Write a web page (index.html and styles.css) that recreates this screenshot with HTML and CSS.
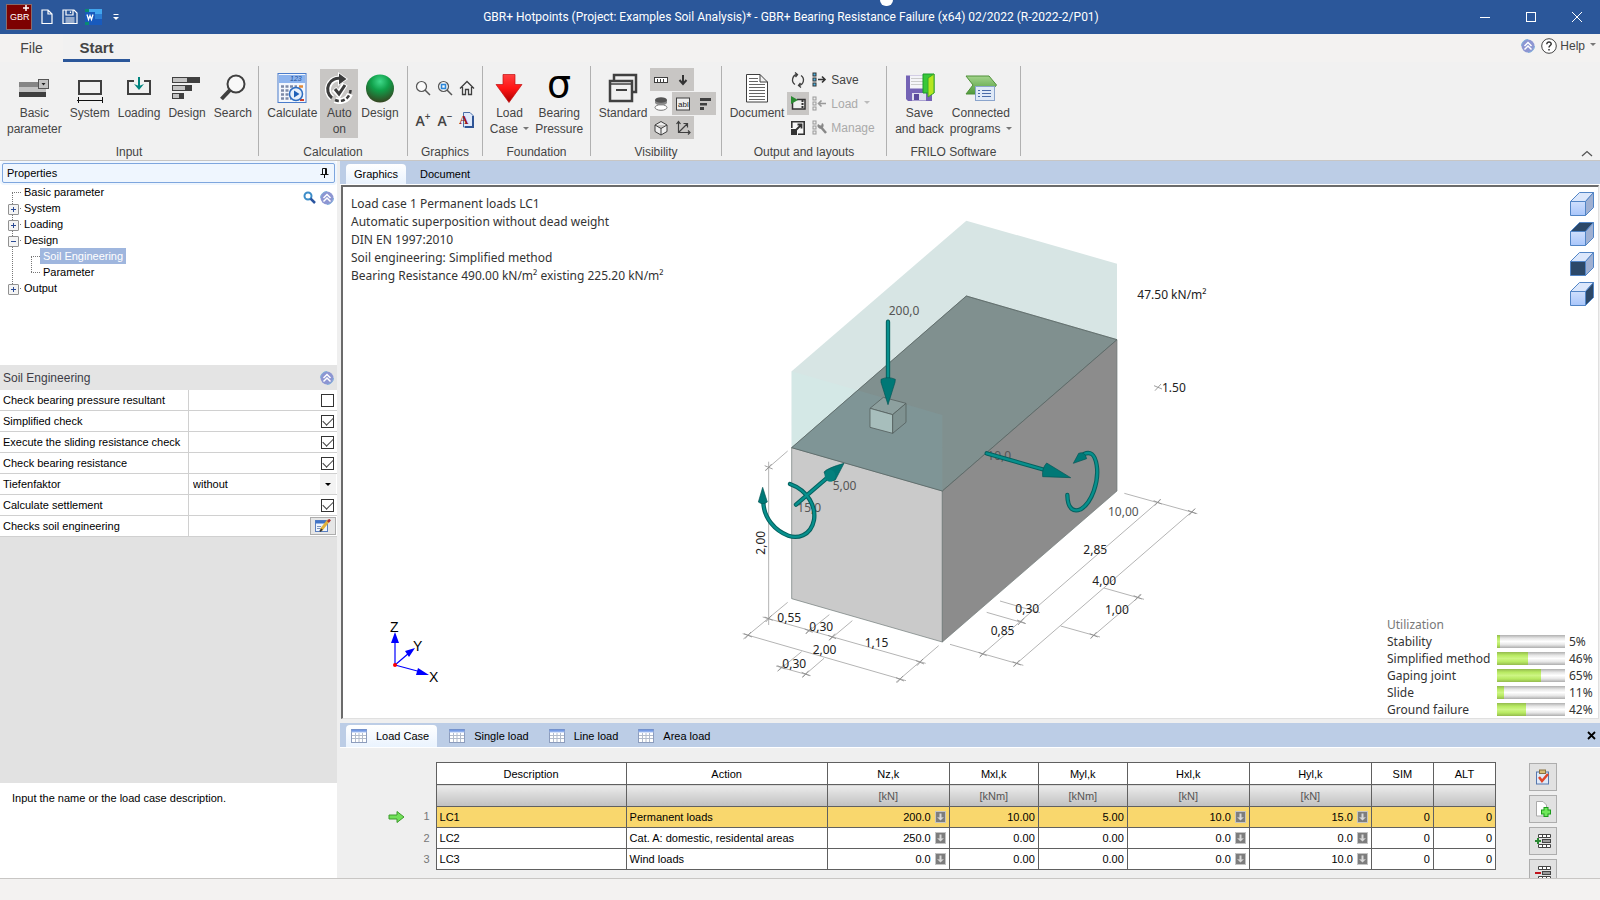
FILE: index.html
```html
<!DOCTYPE html>
<html lang="en">
<head>
    <meta charset="UTF-8">
    <meta name="viewport" content="width=device-width, initial-scale=1.0">
    <title>GBR+ Bearing Resistance Failure</title>
    <link rel="stylesheet" href="styles.css">
</head>
<body>
    <!-- shared icons -->
    <svg class="defs" width="0" height="0" aria-hidden="true">
        <defs>
            <linearGradient id="gBlue" x1="0" y1="0" x2="0" y2="1">
                <stop offset="0" stop-color="#cfdffc"/><stop offset="1" stop-color="#a9c6fb"/>
            </linearGradient>
            <linearGradient id="gRed" x1="0" y1="0" x2="0" y2="1">
                <stop offset="0" stop-color="#ff4040"/><stop offset="0.5" stop-color="#ff1414"/><stop offset="1" stop-color="#a80000"/>
            </linearGradient>
            <radialGradient id="gBall" cx="0.5" cy="0.25" r="0.8">
                <stop offset="0" stop-color="#3fd98a"/><stop offset="0.4" stop-color="#10a04a"/><stop offset="1" stop-color="#3a3a1c"/>
            </radialGradient>
            <linearGradient id="gTab" x1="0" y1="0" x2="0" y2="1">
                <stop offset="0" stop-color="#5a86dc"/><stop offset="1" stop-color="#a9c2f2"/>
            </linearGradient>
            <linearGradient id="gChev" x1="0" y1="0" x2="0" y2="1">
                <stop offset="0" stop-color="#a3d48c"/><stop offset="1" stop-color="#4f9a3a"/>
            </linearGradient>
            <symbol id="iUp" viewBox="0 0 14 14">
                <circle cx="7" cy="7" r="6.5" fill="#8d96d2"/>
                <circle cx="7" cy="7" r="6.5" fill="none" stroke="#7fb0dc" stroke-width="1" stroke-dasharray="10 10"/>
                <path d="M3.500 7 L7 3.500 L10.500 7 M3.500 10.500 L7 7 L10.500 10.500" fill="none" stroke="#fff" stroke-width="1.500"/>
            </symbol>
            <symbol id="iGrid" viewBox="0 0 16 14">
                <rect x="0.5" y="0.5" width="15" height="13" fill="#fff" stroke="#8d9dbd"/>
                <rect x="0.5" y="0.5" width="15" height="3" fill="url(#gTab)"/>
                <path d="M1 6.500 H15 M1 9.500 H15 M4.500 4 V13 M8 4 V13 M11.500 4 V13" stroke="#b3bccb"/>
            </symbol>
            <symbol id="iList" viewBox="0 0 15 15">
                <rect x="1" y="1" width="3" height="3"/><rect x="1" y="6" width="3" height="3"/><rect x="1" y="11" width="3" height="3"/>
            </symbol>
            <symbol id="iDown" viewBox="0 0 11 12">
                <rect x="0.5" y="0.5" width="10" height="11" fill="#7d7d7d" stroke="#c4c4c4"/>
                <path d="M5.500 2.500 V7" stroke="#dadada" stroke-width="2"/>
                <path d="M2 6 L5.500 9.500 L9 6 L7 6.500 H4 Z" fill="#dadada"/>
            </symbol>
            <symbol id="iRows" viewBox="0 0 18 16">
                <path d="M4.500 1.500 H16.500 V4.500 H4.500 Z M8.500 1.500 V4.500 M12.500 1.500 V4.500 M4.500 11.500 H16.500 V14.500 H4.500 Z M8.500 11.500 V14.500 M12.500 11.500 V14.500" fill="#fff" stroke="#444"/>
                <rect x="8.5" y="6.500" width="8" height="3" fill="#9a9a9a" stroke="#444"/>
            </symbol>
            <symbol id="iTick" viewBox="-18 -18 36 36">
                <path d="M-9 10 L9 -10 M-12 -5 L12 5" stroke="#8c8c8c" stroke-width="2.500"/>
            </symbol>
        </defs>
    </svg>

    <header class="titlebar">
        <div class="quick">
            <svg width="26" height="26" viewBox="0 0 26 26">
                <rect x="0.5" y="0.5" width="25" height="25" fill="#7d0202" stroke="#8a6a6a"/>
                <text x="4" y="16" class="logo-text">GBR</text>
                <path d="M17 4 H23 M20 1 V7" stroke="#fff" stroke-width="1.500"/>
            </svg>
            <button aria-label="New">
                <svg width="12" height="16" viewBox="0 0 12 16"><path d="M1 1 H7 L11 5 V14.500 H1 Z M7 1 V5 H11" fill="none" stroke="#fff" stroke-width="1.200"/></svg>
            </button>
            <button aria-label="Save">
                <svg width="16" height="16" viewBox="0 0 16 16"><path d="M1 1 H12 L15 4 V14.500 H1 Z M4 1 V6 H11 V1 M8.500 2.500 V4 M3.500 9 H12.500 M3.500 11 H12.500 M3.500 13 H12.500" fill="none" stroke="#fff" stroke-width="1.200"/></svg>
            </button>
            <button aria-label="Word">
                <svg width="17" height="16" viewBox="0 0 17 16">
                    <rect x="4" y="0" width="13" height="5" fill="#41a5ee"/><rect x="4" y="5" width="13" height="5" fill="#2b7cd3"/><rect x="4" y="10" width="13" height="6" fill="#185abd"/>
                    <rect x="0" y="3" width="10" height="10" fill="#185abd"/><path d="M0 0 h4 v3 h-4 z M0 13 h4 v3 h-4 z" fill="#0a8a72"/>
                    <path d="M2 5.500 L3.500 10.500 L5 6.500 L6.500 10.500 L8 5.500" fill="none" stroke="#fff" stroke-width="1.300"/>
                </svg>
            </button>
            <button aria-label="Customize">
                <svg width="6" height="8" viewBox="0 0 6 8"><path d="M0.500 1.500 H5.500" stroke="#fff"/><path d="M0 4 H6 L3 7 Z" fill="#fff"/></svg>
            </button>
        </div>
        <h1>GBR+ Hotpoints (Project: Examples Soil Analysis)* - GBR+ Bearing Resistance Failure (x64) 02/2022 (R-2022-2/P01)</h1>
        <div class="winctl">
            <button aria-label="Minimize"><svg width="12" height="12" viewBox="0 0 12 12"><path d="M1 6.500 H11" stroke="#fff"/></svg></button>
            <button aria-label="Maximize"><svg width="12" height="12" viewBox="0 0 12 12"><rect x="1.500" y="1.500" width="9" height="9" fill="none" stroke="#fff"/></svg></button>
            <button aria-label="Close"><svg width="12" height="12" viewBox="0 0 12 12"><path d="M1 1 L11 11 M11 1 L1 11" stroke="#fff"/></svg></button>
        </div>
        <span class="pointer"></span>
    </header>

    <nav class="tabs">
        <a href="#file">File</a>
        <a href="#start" class="active">Start</a>
        <div class="help">
            <svg width="14" height="14"><use href="#iUp"/></svg>
            <button>
                <svg width="16" height="16" viewBox="0 0 16 16"><circle cx="8" cy="8" r="7.300" fill="#fff" stroke="#444"/><path d="M5.800 6.200 C5.800 3 10.300 3.300 10.200 6 C10.200 7.500 8 7.500 8 9.500 M8 11 V12.500" fill="none" stroke="#333" stroke-width="1.500"/></svg>
                Help <i class="caret"></i>
            </button>
        </div>
    </nav>

    <section class="ribbon">
        <div class="group g-input">
            <div class="tools">
                <button class="big">
                    <svg width="32" height="32" viewBox="0 0 32 32"><rect x="1" y="10" width="20" height="5" fill="#858585"/><rect x="1" y="15" width="27" height="5" fill="#c3c3c3"/><rect x="1" y="20" width="27" height="5" fill="#3f3f3f"/><rect x="20.500" y="7.500" width="10" height="9" fill="#c3c3c3" stroke="#555"/><path d="M23.500 11 H27.500 L25.500 13.500 Z" fill="#222"/></svg>
                    <span>Basic<br>parameter</span>
                </button>
                <button class="big">
                    <svg width="32" height="32" viewBox="0 0 32 32"><rect x="5" y="9" width="22" height="13" fill="none" stroke="#404040" stroke-width="2"/><path d="M3 28.500 H29 M4.500 25 V31 M28.500 25 V31" stroke="#111"/></svg>
                    <span>System</span>
                </button>
                <button class="big">
                    <svg width="32" height="32" viewBox="0 0 32 32"><rect x="5" y="9" width="22" height="13" fill="none" stroke="#404040" stroke-width="2"/><path d="M11 8 H21 V11 H11 Z" fill="#f1f1f1"/><path d="M16 5 V14" stroke="#00857f" stroke-width="2"/><path d="M11 12 L16 18 L21 12 L16 14 Z" fill="#00857f"/></svg>
                    <span>Loading</span>
                </button>
                <button class="big">
                    <svg width="32" height="32" viewBox="0 0 32 32"><path d="M1 5 H29 V11 H1 Z M1 13 H21 V19 H1 Z M1 21 H13 V27 H1 Z" fill="#404040"/><path d="M2 6 H16 V10 H2 Z M2 14 H14 V18 H2 Z M2 22 H8 V26 H2 Z" fill="#c3c3c3"/></svg>
                    <span>Design</span>
                </button>
                <button class="big">
                    <svg width="32" height="32" viewBox="0 0 32 32"><circle cx="19" cy="12" r="8.500" fill="#f8f8f8" stroke="#404040" stroke-width="2"/><path d="M13 18 L4.500 27" stroke="#404040" stroke-width="4"/></svg>
                    <span>Search</span>
                </button>
            </div>
            <h2>Input</h2>
        </div>

        <div class="group g-calc">
            <div class="tools">
                <button class="big">
                    <svg width="32" height="32" viewBox="0 0 32 32">
                        <rect x="2" y="1.500" width="28" height="29" fill="#f3f7fd" stroke="#4a7ccb"/><rect x="3" y="3" width="26" height="8" fill="#8db4ee"/>
                        <text x="14" y="9" class="tiny">123</text>
                        <path d="M5 14.500 H21 M5 18.500 H15 M5 22.500 H15 M5 26.500 H15" stroke="#7d8ba8" stroke-width="2.500" stroke-dasharray="3 1.500"/><path d="M23 14.500 H27" stroke="#e08a3a" stroke-width="2.500"/><path d="M24 28 H28" stroke="#d0402a" stroke-width="2"/>
                        <circle cx="20" cy="22" r="6.500" fill="#e4eefb" stroke="#2d6cc0" stroke-width="1.500"/><path d="M18 18.500 L23.500 22 L18 25.500 Z" fill="#1d5fb8"/>
                    </svg>
                    <span>Calculate</span>
                </button>
                <button class="big on">
                    <svg width="32" height="32" viewBox="0 0 32 32">
                        <g fill="none" stroke="#fff" stroke-width="6"><path d="M9 26 A11 11 0 0 1 16 6.500 M12 28 A11 11 0 0 0 27 22 M11 17 L16 22 L22 12"/></g>
                        <path d="M15 0 L25 7 L15 14 Z" fill="#fff"/>
                        <path d="M9 26 A11 11 0 0 1 18 6.500" fill="none" stroke="#3c3c3c" stroke-width="3"/><path d="M16 1.500 L23.500 7 L16 12.500 Z" fill="#3c3c3c"/>
                        <path d="M12 28 A11 11 0 0 0 27.500 18" fill="none" stroke="#3c3c3c" stroke-width="2.500" stroke-dasharray="4 2"/>
                        <path d="M12 17 L16 22 L22 13" fill="none" stroke="#3c3c3c" stroke-width="3"/>
                    </svg>
                    <span>Auto<br>on</span>
                </button>
                <button class="big">
                    <svg width="32" height="32" viewBox="0 0 32 32"><circle cx="16" cy="16.500" r="14" fill="url(#gBall)"/></svg>
                    <span>Design</span>
                </button>
            </div>
            <h2>Calculation</h2>
        </div>

        <div class="group g-graphics">
            <div class="minis">
                <button aria-label="Zoom"><svg width="16" height="16" viewBox="0 0 16 16"><circle cx="6.500" cy="6.500" r="5" fill="#fafafa" stroke="#555" stroke-width="1.200"/><path d="M10 10 L15 15" stroke="#555" stroke-width="1.500"/></svg></button>
                <button aria-label="Zoom window"><svg width="16" height="16" viewBox="0 0 16 16"><circle cx="6.500" cy="6.500" r="5" fill="#fafafa" stroke="#555" stroke-width="1.200"/><path d="M10 10 L15 15" stroke="#555" stroke-width="1.500"/><rect x="4.500" y="4.500" width="4" height="4" fill="none" stroke="#2b86d8" stroke-width="1.600"/></svg></button>
                <button aria-label="Home"><svg width="16" height="16" viewBox="0 0 16 16"><path d="M1 8.500 L8 1.500 L15 8.500 M3.500 7 V14.500 H6.500 V9.500 H9.500 V14.500 H12.500 V7" fill="none" stroke="#3f3f3f" stroke-width="1.300"/></svg></button>
                <button class="letter">A<sup>+</sup></button>
                <button class="letter">A<sup>−</sup></button>
                <button aria-label="Font"><svg width="16" height="16" viewBox="0 0 16 16"><path d="M4.500 0.500 H11 L14.500 4 V15 H4.500 Z" fill="#dfe9fa" stroke="#4a6ea8"/><path d="M14 4 V15 H6" fill="none" stroke="#2f5596" stroke-width="2"/><text x="0" y="12" class="red-a">A</text></svg></button>
            </div>
            <h2>Graphics</h2>
        </div>

        <div class="group g-found">
            <div class="tools">
                <button class="big">
                    <svg width="32" height="32" viewBox="0 0 32 32"><path d="M10 2.500 H22 V12.500 H29 L16 30.500 L3 12.500 H10 Z" fill="url(#gRed)" stroke="#c21010" stroke-width="0.700"/></svg>
                    <span>Load<br>Case <i class="caret"></i></span>
                </button>
                <button class="big">
                    <svg width="32" height="32" viewBox="0 0 32 32"><text x="16" y="25" text-anchor="middle" class="sigma">σ</text></svg>
                    <span>Bearing<br>Pressure</span>
                </button>
            </div>
            <h2>Foundation</h2>
        </div>

        <div class="group g-vis">
            <div class="tools">
                <button class="big">
                    <svg width="32" height="32" viewBox="0 0 32 32"><path d="M7 8 V3 H29 V20 H25" fill="none" stroke="#404040" stroke-width="2.500"/><rect x="3" y="9" width="22" height="20" fill="#f1f1f1" stroke="#404040" stroke-width="2.500"/><path d="M4 12 H24" stroke="#404040" stroke-width="1.500"/><path d="M9 18 H20" stroke="#404040" stroke-width="2"/></svg>
                    <span>Standard</span>
                </button>
                <div class="toggles">
                    <button class="on" aria-label="Dimensions"><svg width="16" height="16" viewBox="0 0 16 16"><rect x="1.500" y="5.500" width="13" height="5" fill="#fff" stroke="#3f3f3f"/><path d="M4.500 7 V10 M7.500 7 V10 M10.500 7 V10" stroke="#3f3f3f"/></svg></button>
                    <button class="on" aria-label="Loads"><svg width="16" height="16" viewBox="0 0 16 16"><path d="M8 3 V11 M4.500 8 L8 12 L11.500 8" fill="none" stroke="#333" stroke-width="2"/></svg></button>
                    <i></i>
                    <button aria-label="Layers"><svg width="16" height="16" viewBox="0 0 16 16"><ellipse cx="8" cy="11.500" rx="6" ry="2.800" fill="#fff" stroke="#777"/><path d="M2 4 V7 C4 10 12 10 14 7 V4 Z" fill="#8a8a8a"/><ellipse cx="8" cy="4" rx="6" ry="2.800" fill="#555"/></svg></button>
                    <button class="on" aria-label="Texts"><svg width="16" height="16" viewBox="0 0 16 16"><rect x="1.500" y="2" width="13" height="12" fill="#eee" stroke="#3f3f3f"/><text x="3" y="11" class="abl">abl</text></svg></button>
                    <button class="on" aria-label="Bars"><svg width="16" height="16" viewBox="0 0 16 16"><path d="M3 2 H14 V5 H3 Z M3 7 H10 V9.500 H3 Z M3 11 H7 V14 H3 Z" fill="#3f3f3f"/></svg></button>
                    <button class="on" aria-label="Solid"><svg width="16" height="16" viewBox="0 0 16 16"><path d="M8 1.500 L14 5 V11.500 L8 15 L2 11.500 V5 Z M2 5 L8 8.500 L14 5 M8 8.500 V15" fill="#eee" stroke="#3f3f3f"/></svg></button>
                    <button class="on" aria-label="Axes"><svg width="16" height="16" viewBox="0 0 16 16"><path d="M3.500 2 V12.500 H15 M1.500 4 L3.500 1.500 L5.500 4 M13 10.500 L15 12.500 L13 14.500 M3.500 12.500 L12 4 M8.500 3.500 H12.500 V7.500" fill="none" stroke="#3f3f3f" stroke-width="1.200"/></svg></button>
                    <i></i>
                </div>
            </div>
            <h2>Visibility</h2>
        </div>

        <div class="group g-out">
            <div class="tools">
                <button class="big">
                    <svg width="32" height="32" viewBox="0 0 32 32"><path d="M5.500 2.500 H19 L26.500 10 V30 H5.500 Z M19 2.500 V10 H26.500" fill="#fff" stroke="#3f3f3f"/><path d="M8 6.500 H17 M8 9.500 H17 M8 12.500 H24 M8 15.500 H24 M8 18.500 H24 M8 21.500 H24 M8 24.500 H24 M8 27.500 H24" stroke="#666"/></svg>
                    <span>Document</span>
                </button>
                <div class="stack">
                    <button aria-label="Refresh"><svg width="16" height="16" viewBox="0 0 16 16"><path d="M7 2.500 A5.500 5.500 0 0 0 5 12.500 M9 13.500 A5.500 5.500 0 0 0 11 3.500" fill="none" stroke="#3f3f3f" stroke-width="1.300"/><path d="M5 0.500 L7.500 2.500 L5.500 5 M11 15.500 L8.500 13.500 L10.500 11" fill="none" stroke="#3f3f3f" stroke-width="1.300"/></svg></button>
                    <button class="on" aria-label="Preview"><svg width="16" height="16" viewBox="0 0 16 16"><path d="M2.500 5 V13 H15 V3.500 H7" fill="#eee" stroke="#333" stroke-width="1.500"/><path d="M12.500 4 V13" stroke="#333" stroke-width="2" stroke-dasharray="2 1"/><path d="M1 0 L8 4 L1 8 Z" fill="#2a8a32"/></svg></button>
                    <button aria-label="Enlarge"><svg width="16" height="16" viewBox="0 0 16 16"><path d="M1.800 8 V1.800 H14.200 V14.200 H8" fill="#f7f7f7" stroke="#333" stroke-width="1.600"/><path d="M1 9 H7 V15 H1 Z" fill="#333"/><path d="M6 10 L11.500 4.500 M7.500 4.500 H11.500 V8.500" stroke="#333" fill="none" stroke-width="1.800"/></svg></button>
                </div>
                <div class="stack labels">
                    <button><svg width="15" height="15" viewBox="0 0 15 15"><use href="#iList" fill="#4ab4e6" stroke="#333" width="15" height="15"/><path d="M6 7.500 H13 M10 4.500 L13 7.500 L10 10.500" fill="none" stroke="#333" stroke-width="1.600"/></svg>Save</button>
                    <button disabled><svg width="15" height="15" viewBox="0 0 15 15"><use href="#iList" fill="#eee" stroke="#999" width="15" height="15"/><path d="M6.500 7.500 H14 M9.500 4.500 L6.500 7.500 L9.500 10.500" fill="none" stroke="#999" stroke-width="1.600"/></svg>Load <i class="caret"></i></button>
                    <button disabled><svg width="15" height="15" viewBox="0 0 15 15"><use href="#iList" fill="#eee" stroke="#999" width="15" height="15"/><path d="M8 6 L14 13" stroke="#888" stroke-width="2.500"/><path d="M6 4 A3 3 0 1 0 10 3 L9 6 Z" fill="#888"/></svg>Manage</button>
                </div>
            </div>
            <h2>Output and layouts</h2>
        </div>

        <div class="group g-frilo">
            <div class="tools">
                <button class="big">
                    <svg width="32" height="32" viewBox="0 0 32 32"><path d="M3 3.500 H29 V29 H5 L3 27 Z" fill="#7463b5"/><rect x="7" y="3.500" width="14" height="13" fill="#f4f4f8"/><path d="M8 6.500 H20 M8 9.500 H20 M8 12.500 H20" stroke="#ccc"/><rect x="9" y="21" width="14" height="7.500" fill="#dde"/><rect x="11" y="22" width="5" height="6" fill="#5a4a9c"/><path d="M20 2 H31 V21 H20 Z" fill="#38c838" stroke="#1a9a2a"/><path d="M31 2 V21 L25 25 V6 Z" fill="#b6e620" stroke="#3aa82a"/></svg>
                    <span>Save<br>and back</span>
                </button>
                <button class="big">
                    <svg width="32" height="32" viewBox="0 0 32 32"><path d="M1 4 H24 L31.500 13 L24 22 H1 L8 13 Z" fill="url(#gChev)" stroke="#4f9038"/><rect x="10.500" y="14.500" width="19" height="14" fill="#dfe9f7" stroke="#8aa4cc"/><path d="M13 18.500 H15 M17 18.500 H26 M13 21.500 H15 M17 21.500 H26 M13 24.500 H15 M17 24.500 H26" stroke="#4a6ca8"/></svg>
                    <span>Connected<br>programs <i class="caret"></i></span>
                </button>
            </div>
            <h2>FRILO Software</h2>
        </div>
        <button class="collapse" aria-label="Collapse ribbon"><svg width="12" height="7" viewBox="0 0 12 7"><path d="M1 6 L6 1.500 L11 6" fill="none" stroke="#555" stroke-width="1.300"/></svg></button>
    </section>

    <main class="workspace">
        <aside class="sidebar">
            <div class="props-head">
                <h2>Properties</h2>
                <svg width="9" height="10" viewBox="0 0 9 10"><path d="M2.500 6 V0.500 H6.500 V6 M0.500 6.500 H8.500 M4.500 6.500 V10 M5.500 1 V6" fill="none" stroke="#111"/></svg>
            </div>
            <div class="tree">
                <ul>
                    <li><a href="#basic">Basic parameter</a></li>
                    <li class="node"><a href="#system">System</a></li>
                    <li class="node"><a href="#loading">Loading</a></li>
                    <li class="node open"><a href="#design">Design</a>
                        <ul>
                            <li><a href="#soil" class="selected">Soil Engineering</a></li>
                            <li><a href="#parameter">Parameter</a></li>
                        </ul>
                    </li>
                    <li class="node"><a href="#output">Output</a></li>
                </ul>
                <div class="tree-tools">
                    <svg width="13" height="13" viewBox="0 0 13 13"><circle cx="5" cy="5" r="3.500" fill="#fff" stroke="#3c8cc8" stroke-width="2"/><path d="M7.500 7.500 L12 12" stroke="#2a55a0" stroke-width="2.500"/></svg>
                    <svg width="14" height="14"><use href="#iUp"/></svg>
                </div>
            </div>
            <div class="form-head">
                <h2>Soil Engineering</h2>
                <svg width="14" height="14"><use href="#iUp"/></svg>
            </div>
            <form class="props">
                <div><label for="p1">Check bearing pressure resultant</label><span><input type="checkbox" id="p1"></span></div>
                <div><label for="p2">Simplified check</label><span><input type="checkbox" id="p2" checked></span></div>
                <div><label for="p3">Execute the sliding resistance check</label><span><input type="checkbox" id="p3" checked></span></div>
                <div><label for="p4">Check bearing resistance</label><span><input type="checkbox" id="p4" checked></span></div>
                <div><label for="p5">Tiefenfaktor</label><span class="sel"><select id="p5"><option>without</option></select></span></div>
                <div><label for="p6">Calculate settlement</label><span><input type="checkbox" id="p6" checked></span></div>
                <div><label for="p7">Checks soil engineering</label><span>
                    <button type="button" id="p7" aria-label="Edit"><svg width="16" height="14" viewBox="0 0 16 14"><rect x="0.500" y="1.500" width="12" height="11" fill="#eef4fd" stroke="#5a7fc0"/><rect x="0.500" y="1.500" width="12" height="3" fill="#3f73c8"/><path d="M2 7.500 H6 M2 9.500 H6" stroke="#7a94c0"/><path d="M6 11 L13.500 1.500" stroke="#e2b13c" stroke-width="3"/><path d="M5 12.500 L7 10" stroke="#333" stroke-width="2"/><path d="M13 3 L15 0.500" stroke="#a33" stroke-width="2.500"/></svg></button>
                </span></div>
            </form>
            <div class="filler"></div>
            <p class="hint">Input the name or the load case description.</p>
        </aside>

        <section class="content">
            <nav class="doc-tabs">
                <a href="#graphics" class="active">Graphics</a>
                <a href="#document">Document</a>
            </nav>
            <div class="canvas">
                <div class="left">
                    <p class="notes">Load case 1 Permanent loads LC1<br>Automatic superposition without dead weight<br>DIN EN 1997:2010<br>Soil engineering: Simplified method<br>Bearing Resistance 490.00 kN/m² existing 225.20 kN/m²</p>
                    <svg class="axes" width="60" height="70" viewBox="0 0 60 70">
                        <path d="M10 45 V20 M10 45 L24 33 M10 45 L36 52" stroke="#00f" stroke-width="1.200"/>
                        <path d="M10 12 L6 23 H14 Z M30 28 L20 31 L24 37 Z M44 55 L33 48 L31 55 Z" fill="#00f"/>
                        <circle cx="10" cy="45" r="2" fill="#f00"/>
                        <text x="5" y="12">Z</text><text x="28" y="31">Y</text><text x="44" y="62">X</text>
                    </svg>
                </div>

                <svg class="scene" viewBox="-57 0 1500 1470">
                    <!-- soil pressure volume -->
                    <polygon points="155,484 679,32 1131,161 1131,389 607,843 155,713" fill="#d7e5e4"/>
                    <polygon points="155,484 607,615 607,843 155,713" fill="#d4e8e6"/>
                    <!-- foundation block -->
                    <g stroke="#6d7776" stroke-width="2">
                        <polygon points="155,713 679,258 1131,389 607,843" fill="#80908f"/>
                        <polygon points="155,713 607,843 607,1296 155,1166" fill="#cacaca"/>
                        <polygon points="607,843 1131,389 1131,843 607,1296" fill="#8c8c8c"/>
                    </g>
                    <polygon points="155,713 353,541 607,615 607,843" fill="#7f9596"/>
                    <polygon points="155,713 679,258 1131,389 607,843" fill="none" stroke="#53605f" stroke-width="2"/>
                    <!-- column -->
                    <g stroke="#55605f" stroke-width="2.500">
                        <polygon points="390,595 430,562 498,580 458,614" fill="#8da09f"/>
                        <polygon points="390,595 458,614 458,670 390,652" fill="#a7bebc"/>
                        <polygon points="458,614 498,580 498,637 458,670" fill="#7f9291"/>
                    </g>
                    <!-- dimension lines -->
                    <path class="dim" d="M86 755 V1245 M75 782 L143 723 M143 1177 L10 1287 M68 1221 L557 1360 M198 1270 L268 1214 M268 1290 L337 1232 M596 1307 L468 1417 M8 1271 L498 1412 M112 1384 L185 1325 M186 1402 L252 1345 M108 1368 L212 1397
                        M630 1303 L850 1366 M740 1207 L858 1241 M780 1173 L900 1208 M1153 850 L1372 911 M720 1339 L1262 869 M820 1369 L1366 896 M962 1248 L1080 1281 M1092 1134 L1212 1168 M1052 1284 L1204 1154"/>
                    <g>
                        <use href="#iTick" x="68" y="754" width="36" height="36"/><use href="#iTick" x="68" y="1208" width="36" height="36"/>
                        <use href="#iTick" x="188" y="1244" width="36" height="36"/><use href="#iTick" x="258" y="1263" width="36" height="36"/>
                        <use href="#iTick" x="522" y="1339" width="36" height="36"/><use href="#iTick" x="6" y="1258" width="36" height="36"/>
                        <use href="#iTick" x="462" y="1390" width="36" height="36"/><use href="#iTick" x="106" y="1354" width="36" height="36"/>
                        <use href="#iTick" x="179" y="1374" width="36" height="36"/><use href="#iTick" x="710" y="1314" width="36" height="36"/>
                        <use href="#iTick" x="812" y="1342" width="36" height="36"/><use href="#iTick" x="825" y="1217" width="36" height="36"/>
                        <use href="#iTick" x="1235" y="859" width="36" height="36"/><use href="#iTick" x="1338" y="888" width="36" height="36"/>
                        <use href="#iTick" x="1043" y="1258" width="36" height="36"/><use href="#iTick" x="1175" y="1144" width="36" height="36"/>
                        <use href="#iTick" x="1236" y="514" width="36" height="36"/>
                    </g>
                    <g class="force-text">
                        <text x="446" y="315">200,0</text><text x="278" y="840">5,00</text><text x="172" y="905">15,0</text><text x="742" y="750">10,0</text><text x="1104" y="918">10,00</text>
                    </g>
                    <g class="dim-text">
                        <text x="1192" y="268">47.50 kN/m²</text><text x="1266" y="546">1.50</text>
                        <text x="0" y="0" transform="translate(75 1034) rotate(-90)">2,00</text>
                        <text x="1030" y="1032">2,85</text><text x="1057" y="1125">4,00</text><text x="1095" y="1211">1,00</text><text x="826" y="1209">0,30</text><text x="752" y="1275">0,85</text>
                        <text x="112" y="1236">0,55</text><text x="208" y="1264">0,30</text><text x="374" y="1311">1,15</text><text x="218" y="1332">2,00</text><text x="127" y="1374">0,30</text>
                    </g>
                    <!-- forces and moments -->
                    <g class="shaft-edge"><path d="M444 335 V515 M740 730 L915 780 M168 884 L270 796 M150 822 C205 842 228 890 222 930 C212 980 170 986 145 977 C105 962 72 925 70 878 M982 855 C983 900 1002 906 1022 898 C1055 878 1078 815 1070 765 C1064 730 1050 724 1032 732"/></g>
                    <g class="shaft"><path d="M444 335 V515 M740 730 L915 780 M168 884 L270 796 M150 822 C205 842 228 890 222 930 C212 980 170 986 145 977 C105 962 72 925 70 878 M982 855 C983 900 1002 906 1022 898 C1055 878 1078 815 1070 765 C1064 730 1050 724 1032 732"/></g>
                    <g fill="#007876" stroke="#045554" stroke-width="2">
                        <path d="M423 508 Q444 498 466 508 L465 517 L444 584 L423 517 Z"/>
                        <path d="M920 759 L992 803 L908 800 Q905 775 920 759 Z"/>
                        <path d="M252 786 Q262 774 312 760 L286 810 Q262 822 252 786 Z"/>
                        <path d="M68 832 L82 876 Q68 886 55 876 Z"/>
                        <path d="M1000 760 L1016 730 Q1034 722 1040 746 Z"/>
                    </g>
                    <ellipse cx="270" cy="797" rx="16" ry="18" fill="#03807d"/>
                </svg>

                <div class="right">
                    <div class="cubes">
                        <button aria-label="Isometric"><svg width="24" height="24" viewBox="0 0 24 24"><path d="M0.500 9.500 L9.500 0.500 H23.500 L15.500 9.500 Z" fill="#dce7fb"/><path d="M15.500 9.500 L23.500 0.500 V15.500 L15.500 23.500 Z" fill="#9fb0d2"/><path d="M0.500 9.500 H15.500 V23.500 H0.500 Z" fill="url(#gBlue)"/></svg></button>
                        <button aria-label="Top"><svg width="24" height="24" viewBox="0 0 24 24"><path d="M0.500 9.500 L9.500 0.500 H23.500 L15.500 9.500 Z" fill="#2c4868"/><path d="M15.500 9.500 L23.500 0.500 V15.500 L15.500 23.500 Z" fill="#9fb0d2"/><path d="M0.500 9.500 H15.500 V23.500 H0.500 Z" fill="url(#gBlue)"/></svg></button>
                        <button aria-label="Front"><svg width="24" height="24" viewBox="0 0 24 24"><path d="M0.500 9.500 L9.500 0.500 H23.500 L15.500 9.500 Z" fill="#dce7fb"/><path d="M15.500 9.500 L23.500 0.500 V15.500 L15.500 23.500 Z" fill="#9fb0d2"/><path d="M0.500 9.500 H15.500 V23.500 H0.500 Z" fill="#2c4868"/></svg></button>
                        <button aria-label="Side"><svg width="24" height="24" viewBox="0 0 24 24"><path d="M0.500 9.500 L9.500 0.500 H23.500 L15.500 9.500 Z" fill="#dce7fb"/><path d="M15.500 9.500 L23.500 0.500 V15.500 L15.500 23.500 Z" fill="#2c4868"/><path d="M0.500 9.500 H15.500 V23.500 H0.500 Z" fill="url(#gBlue)"/></svg></button>
                    </div>
                    <div class="util">
                        <h3>Utilization</h3>
                        <div><span>Stability</span><b class="bar"><i style="width: 5%"></i></b><em>5%</em></div>
                        <div><span>Simplified method</span><b class="bar"><i style="width: 46%"></i></b><em>46%</em></div>
                        <div><span>Gaping joint</span><b class="bar"><i style="width: 65%"></i></b><em>65%</em></div>
                        <div><span>Slide</span><b class="bar"><i style="width: 11%"></i></b><em>11%</em></div>
                        <div><span>Ground failure</span><b class="bar"><i style="width: 42%"></i></b><em>42%</em></div>
                    </div>
                </div>
            </div>

            <div class="loads">
                <nav class="load-tabs">
                    <a href="#lc" class="active"><svg width="16" height="14"><use href="#iGrid"/></svg>Load Case</a>
                    <a href="#single"><svg width="16" height="14"><use href="#iGrid"/></svg>Single load</a>
                    <a href="#line"><svg width="16" height="14"><use href="#iGrid"/></svg>Line load</a>
                    <a href="#area"><svg width="16" height="14"><use href="#iGrid"/></svg>Area load</a>
                    <button aria-label="Close"><svg width="9" height="9" viewBox="0 0 9 9"><path d="M1 1 L8 8 M8 1 L1 8" stroke="#000" stroke-width="1.800"/></svg></button>
                </nav>
                <div class="load-body">
                    <table>
                        <colgroup><col class="c-no"><col class="c-desc"><col class="c-action"><col class="c-wide"><col class="c-mid"><col class="c-mid"><col class="c-wide"><col class="c-wide"><col class="c-small"><col class="c-small"></colgroup>
                        <thead>
                            <tr><td></td><th>Description</th><th>Action</th><th>Nz,k</th><th>Mxl,k</th><th>Myl,k</th><th>Hxl,k</th><th>Hyl,k</th><th>SIM</th><th>ALT</th></tr>
                            <tr class="units"><td></td><th></th><th></th><th>[kN]</th><th>[kNm]</th><th>[kNm]</th><th>[kN]</th><th>[kN]</th><th></th><th></th></tr>
                        </thead>
                        <tbody>
                            <tr class="current">
                                <td class="no"><svg width="17" height="14" viewBox="0 0 17 14"><path d="M1 5 H9 V1.500 L16 7 L9 12.500 V9 H1 Z" fill="#72e05a" stroke="#3d9a2c"/></svg>1</td>
                                <td>LC1</td><td>Permanent loads</td>
                                <td class="num">200.0<button aria-label="More"><svg width="11" height="12"><use href="#iDown"/></svg></button></td><td class="num">10.00</td><td class="num">5.00</td>
                                <td class="num">10.0<button aria-label="More"><svg width="11" height="12"><use href="#iDown"/></svg></button></td><td class="num">15.0<button aria-label="More"><svg width="11" height="12"><use href="#iDown"/></svg></button></td>
                                <td class="num">0</td><td class="num">0</td>
                            </tr>
                            <tr>
                                <td class="no">2</td>
                                <td>LC2</td><td>Cat. A: domestic, residental areas</td>
                                <td class="num">250.0<button aria-label="More"><svg width="11" height="12"><use href="#iDown"/></svg></button></td><td class="num">0.00</td><td class="num">0.00</td>
                                <td class="num">0.0<button aria-label="More"><svg width="11" height="12"><use href="#iDown"/></svg></button></td><td class="num">0.0<button aria-label="More"><svg width="11" height="12"><use href="#iDown"/></svg></button></td>
                                <td class="num">0</td><td class="num">0</td>
                            </tr>
                            <tr>
                                <td class="no">3</td>
                                <td>LC3</td><td>Wind loads</td>
                                <td class="num">0.0<button aria-label="More"><svg width="11" height="12"><use href="#iDown"/></svg></button></td><td class="num">0.00</td><td class="num">0.00</td>
                                <td class="num">0.0<button aria-label="More"><svg width="11" height="12"><use href="#iDown"/></svg></button></td><td class="num">10.0<button aria-label="More"><svg width="11" height="12"><use href="#iDown"/></svg></button></td>
                                <td class="num">0</td><td class="num">0</td>
                            </tr>
                        </tbody>
                    </table>
                    <div class="side">
                        <button aria-label="Check"><svg width="16" height="16" viewBox="0 0 16 16"><rect x="1.500" y="3" width="12" height="12" fill="#dfe9f8" stroke="#5577ae"/><rect x="4.500" y="1" width="6" height="3.500" fill="#d8bc78" stroke="#8a7340"/><path d="M4 8 L7 12 L13 5" fill="none" stroke="#e0462a" stroke-width="2.500"/></svg></button>
                        <button aria-label="New row"><svg width="18" height="18" viewBox="0 0 18 18"><path d="M2.500 1.500 H9 L12.500 5 V16 H2.500 Z" fill="#fff" stroke="#aaa"/><path d="M12 7 V17 M7 12 H17" stroke="#1c9a1c" stroke-width="5"/><path d="M12 8 V16 M8 12 H16" stroke="#6fe85a" stroke-width="3"/></svg></button>
                        <button aria-label="Insert row"><svg width="18" height="16" viewBox="0 0 18 16"><use href="#iRows" width="18" height="16"/><path d="M4 5 V11 M1 8 H7" stroke="#2a8a32" stroke-width="2"/></svg></button>
                        <button aria-label="Delete row"><svg width="18" height="16" viewBox="0 0 18 16"><use href="#iRows" width="18" height="16"/><path d="M1 8 H7" stroke="#c0141c" stroke-width="2"/></svg></button>
                    </div>
                </div>
            </div>
        </section>
    </main>

    <footer class="status"></footer>
</body>
</html>
```
FILE: styles.css
```css
* {
    box-sizing: border-box;
}

body {
    margin: 0;
    height: 100vh;
    display: flex;
    flex-direction: column;
    overflow: hidden;
    background: #efefef;
    color: #000;
    font-family: "Liberation Sans", Arial, sans-serif;
    font-size: 11px;
}

h1, h2, h3, p, ul {
    margin: 0;
    padding: 0;
    font-weight: normal;
    font-size: inherit;
}

a {
    color: inherit;
    text-decoration: none;
}

button {
    padding: 0;
    border: 0;
    background: none;
    color: inherit;
    font: inherit;
}

svg {
    display: block;
    flex: none;
}

.defs {
    position: absolute;
}

.caret {
    display: inline-block;
    border: 3px solid transparent;
    border-top-color: #777;
    border-bottom: 0;
    vertical-align: middle;
    margin: 0 0 2px 2px;
}

/* title bar */
.titlebar {
    position: relative;
    flex: 0 0 34px;
    display: flex;
    align-items: center;
    justify-content: space-between;
    background: #2b579a;
    color: #fff;
}

.titlebar h1 {
    font: 12px Roboto, sans-serif;
    white-space: nowrap;
}

.quick {
    display: flex;
    align-items: center;
    gap: 9px;
    width: 442px;
    padding-left: 6px;
}

.quick button:nth-of-type(3) {
    margin: 0 2px 0 -2px;
}

.logo-text {
    font-size: 9px;
    fill: #fff;
}

.winctl {
    display: flex;
    width: 460px;
    justify-content: flex-end;
}

.winctl button {
    width: 46px;
    height: 34px;
    display: grid;
    place-items: center;
}

.pointer {
    position: absolute;
    left: 55%;
    top: 0;
    width: 13px;
    height: 6px;
    border-radius: 0 0 7px 7px;
    background: #fff;
}

/* ribbon tabs */
.tabs {
    flex: 0 0 28px;
    display: flex;
    background: #f3f2f1;
    color: #444;
    font-size: 14px;
}

.tabs a {
    width: 63px;
    text-align: center;
    line-height: 28px;
}

.tabs .active {
    width: 67px;
    background: #f1f1f1;
    box-shadow: inset 0 -3px #2b579a;
    font-size: 15px;
    font-weight: bold;
}

.help {
    display: flex;
    align-items: center;
    gap: 6px;
    margin-left: auto;
    padding: 0 4px 5px 0;
    font-size: 12px;
}

.help button {
    display: flex;
    align-items: center;
    gap: 3px;
}

/* ribbon */
.ribbon {
    position: relative;
    flex: 0 0 99px;
    display: flex;
    padding-top: 4px;
    background: #f1f1f1;
    border-bottom: 1px solid #c8c6c4;
    color: #444;
    font-size: 12px;
}

.group {
    display: flex;
    flex-direction: column;
    justify-content: space-between;
    height: 90px;
    padding-top: 3px;
    border-right: 1px solid #b1b1b1;
}

.group h2 {
    text-align: center;
    line-height: 14px;
    margin-bottom: -3px;
}

.g-input { width: 259px; }
.g-calc { width: 149px; }
.g-graphics { width: 75px; }
.g-found { width: 108px; }
.g-vis { width: 131px; }
.g-out { width: 165px; }
.g-frilo { width: 134px; }

.tools {
    display: flex;
    justify-content: center;
}

.big {
    display: flex;
    flex-direction: column;
    align-items: center;
    height: 69px;
    padding: 3px 3px 0;
    line-height: 16px;
    white-space: nowrap;
}

.big svg {
    margin-bottom: 1px;
}

.g-input .tools {
    justify-content: flex-start;
    padding-left: 3px;
}

.g-input .big {
    padding: 3px 4px 0;
}

.g-calc .on {
    width: 38px;
}

.on {
    background: #c8c6c4;
}

.tiny {
    font-size: 7px;
    font-style: italic;
    fill: #1f5199;
}

.minis {
    display: grid;
    grid-template-columns: repeat(3, 22px);
    grid-auto-rows: 32px;
    justify-content: center;
    padding-top: 3px;
}

.minis button {
    display: grid;
    place-items: center;
}

.minis .letter {
    display: block;
    font: 600 14px "Open Sans", sans-serif;
}

.minis sup {
    font-size: 10px;
    line-height: 0;
}

.red-a {
    font: bold 13px "Liberation Serif", serif;
    fill: #9a1420;
}

.sigma {
    font: 38px "DejaVu Sans", sans-serif;
    fill: #000;
}

.abl {
    font-size: 8px;
    fill: #222;
}

.toggles {
    display: grid;
    grid-template-columns: repeat(3, 22px);
}

.toggles,
.stack {
    grid-template-rows: repeat(3, 23px);
    row-gap: 1px;
    margin-top: -1px;
}

.toggles button,
.stack button {
    display: grid;
    place-items: center;
}

.stack {
    display: grid;
    width: 22px;
}

.stack.labels {
    width: 72px;
}

.stack.labels button {
    display: flex;
    align-items: center;
    gap: 4px;
    padding-left: 3px;
    white-space: nowrap;
}

.stack button:disabled {
    color: #aaa;
}

.stack button:disabled .caret {
    border-top-color: #bbb;
}

.collapse {
    position: absolute;
    right: 7px;
    bottom: 3px;
}

/* workspace */
.workspace {
    flex: 1;
    display: flex;
    min-height: 0;
    gap: 3px;
}

.sidebar {
    flex: 0 0 337px;
    display: flex;
    flex-direction: column;
    background: #fff;
}

.props-head {
    display: flex;
    align-items: center;
    justify-content: space-between;
    height: 20px;
    margin: 2px 2px 1px;
    padding: 0 5px 0 4px;
    border: 1px solid #7ea6de;
    border-radius: 2px;
    background: #eff6fe;
    box-shadow: 0 0 0 2px #eff6fe;
}

.tree {
    display: flex;
    justify-content: space-between;
    height: 181px;
}

.tree ul {
    list-style: none;
}

.tree > ul {
    padding-left: 12px;
}

.tree li {
    position: relative;
    line-height: 16px;
    padding-left: 12px;
}

/* dotted connectors */
.tree li::before {
    content: "";
    position: absolute;
    left: 0;
    top: 8px;
    width: 9px;
    border-top: 1px dotted #777;
}

.tree li::after {
    content: "";
    position: absolute;
    left: 0;
    top: 8px;
    bottom: -8px;
    border-left: 1px dotted #777;
}

.tree li:last-child::after {
    display: none;
}

.tree .node > a::before {
    content: "";
    position: absolute;
    z-index: 1;
    left: -4px;
    top: 4px;
    width: 9px;
    height: 9px;
    border: 1px solid #919191;
    border-radius: 1px;
    background:
        linear-gradient(#2a4a94, #2a4a94) center / 5px 1px no-repeat,
        linear-gradient(#2a4a94, #2a4a94) center / 1px 5px no-repeat,
        #f4f4f4;
}

.tree .open > a::before {
    background:
        linear-gradient(#2a4a94, #2a4a94) center / 5px 1px no-repeat,
        #f4f4f4;
}

.tree li li {
    margin-left: 7px;
}

.tree .selected {
    display: block;
    margin-left: -3px;
    padding: 0 3px;
    background: #9fb6de;
    color: #fff;
}

.tree-tools {
    display: flex;
    gap: 4px;
    padding: 7px 3px;
}

.form-head {
    display: flex;
    align-items: center;
    justify-content: space-between;
    height: 25px;
    padding: 0 3px;
    background: #e4e4e4;
    color: #3c3c46;
    font-size: 12px;
}

.props > div {
    display: flex;
    height: 21px;
    border-bottom: 1px solid #d0d0d0;
    line-height: 20px;
}

.props label {
    width: 189px;
    padding-left: 3px;
    border-right: 1px solid #d0d0d0;
    white-space: nowrap;
}

.props span {
    flex: 1;
    display: flex;
    align-items: center;
    justify-content: flex-end;
    padding-right: 3px;
}

.props input {
    appearance: none;
    display: grid;
    place-items: center;
    width: 13px;
    height: 13px;
    margin: 0;
    border: 1px solid #333;
    background: #fff;
}

.props input:checked::after {
    content: "";
    width: 9px;
    height: 5px;
    margin-top: -3px;
    border: solid #444;
    border-width: 0 0 1px 1px;
    transform: rotate(-45deg);
}

.props .sel {
    position: relative;
    padding-right: 1px;
}

.props select {
    appearance: none;
    width: 100%;
    height: 20px;
    padding: 0 4px;
    border: 0;
    background: linear-gradient(#f3f3f3, #f3f3f3) right / 16px 100% no-repeat;
    color: #000;
    font: inherit;
}

.props .sel::after {
    content: "";
    position: absolute;
    right: 6px;
    top: 9px;
    border: 3px solid transparent;
    border-top-color: #000;
    border-bottom: 0;
}

.props button {
    display: grid;
    place-items: center;
    width: 26px;
    height: 18px;
    margin-right: -2px;
    border: 1px solid #adadad;
    background: #e6e6e6;
}

.filler {
    flex: 1;
    background: #e2e2e2;
}

.hint {
    height: 95px;
    padding: 8px 12px;
    line-height: 15px;
}

/* content side */
.content {
    flex: 1;
    min-width: 0;
    display: flex;
    flex-direction: column;
}

.doc-tabs,
.load-tabs {
    display: flex;
    align-items: flex-end;
    flex: 0 0 24px;
    padding-left: 6px;
    background: #bccde6;
    border-bottom: 1px solid #fff;
}

.doc-tabs a,
.load-tabs a {
    display: flex;
    align-items: center;
    height: 20px;
    padding: 0 8px;
    border-radius: 4px 4px 0 0;
}

.doc-tabs a + a {
    margin-left: 6px;
}

.doc-tabs .active,
.load-tabs .active {
    background: linear-gradient(#fff, #eaf3fe);
}

.canvas {
    flex: 1;
    min-height: 0;
    display: grid;
    grid-template-columns: minmax(0, 1fr) 500px minmax(0, 1fr);
    margin: 0 1px;
    background: #fff;
    border: 1px solid #e0e0e0;
    border-top: 2px solid #6b6b6b;
    border-left: 2px solid #6b6b6b;
    color: #333;
    font-family: "Noto Sans", sans-serif;
    font-size: 12px;
}

.canvas .left,
.canvas .right {
    display: flex;
    flex-direction: column;
    justify-content: space-between;
}

.notes {
    padding: 8px;
    line-height: 18px;
    white-space: nowrap;
}

.axes {
    margin: 0 0 28px 42px;
    font: 14px "Liberation Sans", sans-serif;
}

.scene {
    width: 500px;
    height: 490px;
    margin-top: 23px;
    overflow: visible;
    font-size: 36px;
}

.dim {
    fill: none;
    stroke: #b4b4b4;
    stroke-width: 3;
}

.force-text {
    fill: #555;
}

.dim-text {
    fill: #222;
}

.shaft,
.shaft-edge {
    fill: none;
    stroke: #05605e;
    stroke-width: 13;
    stroke-linecap: round;
}

.shaft {
    stroke: #07908d;
    stroke-width: 7;
}

.right {
    align-items: flex-end;
}

.cubes {
    display: grid;
    gap: 6px;
    padding: 5px 4px 0 0;
}

.cubes svg path {
    stroke: #5285c6;
}

.util {
    margin-right: 5px;
    line-height: 17px;
    white-space: nowrap;
}

.util h3 {
    color: #777;
}

.util div {
    display: grid;
    grid-template-columns: 110px 68px 28px;
    align-items: center;
}

.util em {
    padding-left: 4px;
    font-style: normal;
}

.bar {
    height: 13px;
    background: linear-gradient(#b0b0b0, #e6e6e6 25%, #fff 50%, #e6e6e6 75%, #adadad);
}

.bar i {
    display: block;
    height: 100%;
    background: linear-gradient(#94ba4e, #b8ea62 25%, #cdf584 50%, #b8ea62 75%, #94ba4e);
}

/* load table */
.loads {
    flex: 0 0 155px;
    margin-top: 4px;
    overflow: hidden;
}

.load-tabs {
    height: 25px;
}

.load-tabs a {
    height: 22px;
    padding: 0 8px 0 5px;
    gap: 9px;
}

.load-tabs a + a {
    margin-left: 7px;
}

.load-tabs button {
    margin: 0 4px 7px auto;
}

.load-body {
    display: flex;
    align-items: flex-start;
    gap: 33px;
    padding-top: 14px;
}

table {
    table-layout: fixed;
    width: 1156px;
    border-collapse: collapse;
}

.c-no { width: 96px; }
.c-desc { width: 190px; }
.c-action { width: 201px; }
.c-wide { width: 122px; }
.c-mid { width: 89px; }
.c-small { width: 62px; }

th,
tbody td {
    height: 21px;
    padding: 0 3px;
    border: 1px solid #606060;
    background: #fff;
    font-weight: normal;
    white-space: nowrap;
}

th {
    height: 22px;
}

.units th {
    background: linear-gradient(#ececec, #c0c0c0);
    color: #555;
}

.current td {
    background: #f9d76d;
}

tbody td.no {
    border: 0;
    border-right: 1px solid #606060;
    padding-right: 6px;
    background: none;
    color: #777;
    text-align: right;
}

.no svg {
    display: inline-block;
    margin-right: 18px;
    vertical-align: middle;
}

.num {
    text-align: right;
}

.num button {
    margin-left: 4px;
    vertical-align: -2px;
}

.side {
    display: grid;
    grid-auto-rows: 28px;
    gap: 4px;
    margin-top: 1px;
}

.side button {
    display: grid;
    place-items: center;
    width: 28px;
    border: 1px solid #adadad;
    background: #e1e1e1;
}

.status {
    flex: 0 0 22px;
    background: #f3f2f1;
    border-top: 1px solid #c8c6c4;
}
```
